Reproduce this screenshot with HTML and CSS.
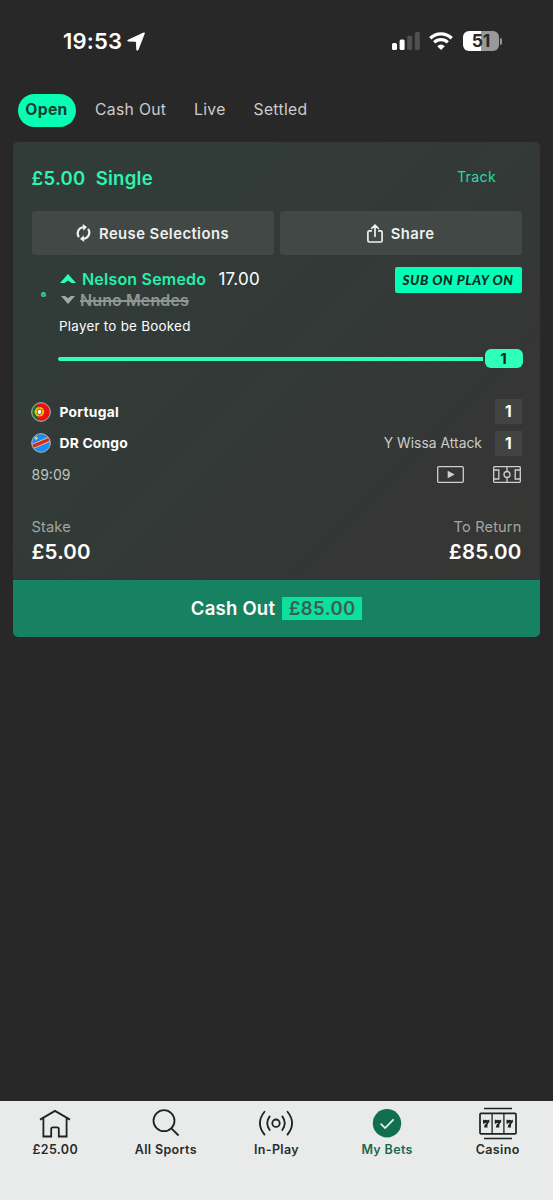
FILE: index.html
```
<!DOCTYPE html>
<html lang="en">
<head>
<meta charset="utf-8">
<meta name="viewport" content="width=device-width, initial-scale=1">
<title>My Bets</title>
<link rel="stylesheet" href="styles.css">
</head>
<body>
<div class="app">
  <header class="status">
    <div class="status-left">
      <span class="time">19:53</span>
      <svg class="locate" width="18" height="19" viewBox="0 0 18 19"><path d="M16.600.500Q18.200 0 17.800 1.500L11.600 17.600Q10.500 19.600 9.300 17.800L9 10.600Q8.900 9.800 8.200 9.800L1 9.500Q-.700 8.700 1 7.700Z" fill="#fff"/></svg>
    </div>
    <div class="status-right">
      <svg width="28" height="18" viewBox="0 0 28 18"><rect x="0" y="11" width="5" height="7" rx="1.500" fill="#fff"/><rect x="7.600" y="7.500" width="5" height="10.500" rx="1.500" fill="#fff"/><rect x="15.200" y="3.800" width="5" height="14.200" rx="1.500" fill="#505050"/><rect x="22.800" y="0" width="5" height="18" rx="1.500" fill="#505050"/></svg>
      <svg class="wifi" width="24" height="18" viewBox="0 0 24 18"><path d="M1.300 6.200a15.300 15.300 0 0 1 21.400 0M5.200 10.400a9.900 9.900 0 0 1 13.600 0" fill="none" stroke="#fff" stroke-width="3.300"/><path d="M8.200 14.200a5.800 5.800 0 0 1 7.600 0L12 18Z" fill="#fff"/></svg>
      <div class="battery"><span class="battery-level">51</span><i class="battery-cap"></i></div>
    </div>
  </header>

  <nav class="tabs">
    <span class="tab tab-active">Open</span><span class="tab tab-cash">Cash Out</span><span class="tab tab-live">Live</span><span class="tab tab-settled">Settled</span>
  </nav>

  <main class="card">
    <div class="card-body">
      <div class="card-head"><span class="bet-type"><span>£5.00</span><span>Single</span></span><span class="track">Track</span></div>
      <div class="actions">
        <button class="action action-reuse">
          <svg width="15" height="18" viewBox="0 0 15 18" fill="none" stroke="#eef1ef" stroke-width="2.100"><path d="M3 13.200A6.100 6.100 0 0 1 7.800 3.300M12 4.800A6.100 6.100 0 0 1 7.200 14.700"/><path d="M6.700 0 11 3.100 7.300 6.800ZM8.300 18 4 14.900 7.700 11.200Z" fill="#eef1ef" stroke="none"/></svg>
          <span>Reuse Selections</span>
        </button>
        <button class="action action-share">
          <svg width="16" height="19" viewBox="0 0 16 19" fill="none" stroke="#eef1ef" stroke-width="1.700" stroke-linecap="round" stroke-linejoin="round"><path d="M4.200 6.900H2.300Q.900 6.900.900 8.300v8.300Q.900 18 2.300 18h11.400q1.400 0 1.400-1.400V8.300q0-1.400-1.400-1.400h-1.900M8 12.300V1.200M4.600 4.500 8 1.100l3.400 3.400"/></svg>
          <span>Share</span>
        </button>
      </div>

      <section class="selection">
        <div class="marker"><svg width="5" height="5" viewBox="0 0 5 5"><circle cx="2.500" cy="2.500" r="2.500" fill="#2adba0"/><path d="m1.200 2.500 1 1 1.600-1.900" stroke="#27423a" stroke-width=".8" fill="none"/></svg></div>
        <div class="selection-main">
          <div class="player-in"><svg width="16" height="9" viewBox="0 0 16 9"><path d="M0 9 8 0l8 9h-4.500L8 6.500 4.500 9Z" fill="#2cffb6"/></svg><span class="in-name">Nelson Semedo</span><span class="odds">17.00</span><span class="promo">SUB ON PLAY ON</span></div>
          <div class="player-out"><svg width="14" height="8" viewBox="0 0 14 8"><path d="M0 0 7 8l7-8h-4L7 2.200 4 0Z" fill="#a3a8a6"/></svg><span>Nuno Mendes</span></div>
          <div class="market">Player to be Booked</div>
          <div class="progress"><i></i><b>1</b></div>
        </div>
      </section>

      <section class="match">
        <div class="team">
          <svg width="20" height="20" viewBox="0 0 20 20"><defs><clipPath id="pt"><circle cx="10" cy="10" r="9"/></clipPath></defs><g clip-path="url(#pt)"><path d="M0 0h20v20H0Z" fill="#f00f0f"/><path d="M0 0h6.500v20H0Z" fill="#147329"/><circle cx="8.400" cy="9.800" r="4.800" fill="#efc51c"/><path d="m4.800 7.200 7.200 5.200M12 7.200l-7.200 5.200M8.400 5v9.600" stroke="#b96b16" stroke-width=".7"/><path d="M6.200 7.300h4.600v3.200q0 2.400-2.300 2.400t-2.300-2.400Z" fill="#e23a30"/><path d="M7 8h3v2.600q0 1.400-1.500 1.400T7 10.600Z" fill="#fff"/></g><circle cx="10" cy="10" r="9.300" fill="none" stroke="#b9bdb5" stroke-width="1"/></svg>
          <span class="team-name">Portugal</span><span class="score">1</span>
        </div>
        <div class="team">
          <svg width="20" height="20" viewBox="0 0 20 20"><defs><clipPath id="cd"><circle cx="10" cy="10" r="9"/></clipPath></defs><g clip-path="url(#cd)"><path d="M0 0h20v20H0Z" fill="#178df5"/><path d="M-1 14.500 21 5.200" stroke="#f4d36b" stroke-width="5"/><path d="M-1 14.500 21 5.200" stroke="#d8212b" stroke-width="3.300"/><path d="m5.200 3 .6 1.300 1.400.2-1 1 .2 1.400-1.200-.7-1.200.7.200-1.400-1-1 1.400-.2Z" fill="#efdc5a"/></g><circle cx="10" cy="10" r="9.300" fill="none" stroke="#b9c3c8" stroke-width="1"/></svg>
          <span class="team-name congo">DR Congo</span><span class="event">Y Wissa Attack</span><span class="score">1</span>
        </div>
        <div class="clock-row"><span class="clock">89:09</span>
          <svg width="27" height="17" viewBox="0 0 27 17"><rect x=".7" y=".7" width="25.600" height="15.600" rx="1" fill="none" stroke="#ccd0ce" stroke-width="1.300"/><path d="m10.700 4.800 7 3.700-7 3.700Z" fill="#ccd0ce"/></svg>
          <svg class="pitch" width="28" height="17" viewBox="0 0 28 17" fill="none" stroke="#ccd0ce" stroke-width="1.300"><rect x=".7" y=".7" width="26.600" height="15.600" rx=".8"/><path d="M14 .7v4.800M14 11.500v4.800M.7 4H5.800v9H.7M27.300 4h-5.100v9h5.100"/><circle cx="14" cy="8.500" r="3"/></svg>
        </div>
      </section>

      <footer class="totals">
        <div><div class="label">Stake</div><div class="amount">£5.00</div></div>
        <div class="returns"><div class="label">To Return</div><div class="amount">£85.00</div></div>
      </footer>
    </div>
    <button class="cashout"><span>Cash Out</span><mark>£85.00</mark></button>
  </main>

  <nav class="bottom">
    <div class="nav-item"><svg width="32" height="32" viewBox="0 0 32 32" fill="none" stroke="#202322" stroke-width="1.800"><path d="M1 12.600 16 3.900l15 8.700M4.400 11v18.500h7.800v-7.600q0-1.600 1.600-1.600h4.400q1.600 0 1.600 1.600v7.600h7.800V11"/></svg><span>£25.00</span></div>
    <div class="nav-item"><svg width="32" height="32" viewBox="0 0 32 32" fill="none" stroke="#202322" stroke-width="1.800"><circle cx="14" cy="13.700" r="10.500"/><path d="m21.300 21.300 7.300 7.200"/></svg><span>All Sports</span></div>
    <div class="nav-item"><svg width="36" height="32" viewBox="0 0 36 32" fill="none" stroke="#202322" stroke-width="1.800" stroke-linecap="round"><circle cx="18" cy="16.200" r="3.700"/><path d="M11.700 9.400q-5 6.800 0 13.600M24.300 9.400q5 6.800 0 13.600M6.500 4.800q-9.200 11.400 0 22.800M29.500 4.800q9.200 11.400 0 22.800"/></svg><span>In-Play</span></div>
    <div class="nav-item nav-active"><svg width="32" height="32" viewBox="0 0 32 32" fill="none"><circle cx="16" cy="16.200" r="14.200" fill="#126e51"/><path d="m9.600 16.700 4.500 4.300 8.500-8.700" stroke="#eef3f0" stroke-width="1.700"/></svg><span>My Bets</span></div>
    <div class="nav-item"><svg width="38" height="32" viewBox="0 0 38 32" fill="none" stroke="#202322"><path d="M5 1.500h28M5 31.500h28" stroke-width="1.400"/><rect x="1" y="6.300" width="36" height="20.500" rx="1" stroke-width="1.700"/><path d="M13.100 6.300v20.500M24.900 6.300v20.500" stroke-width="1.300"/><g fill="#202322" stroke="none"><path id="seven" d="M4 12.700h1.100l.4.600q1.200-1 2.500-.2 1 .6 1.800-.4h.6v2.300q-2.700 2.200-1.800 5.400H5.100q.1-2.800 2.600-4.600-1.600-.2-2.700 1H4Z"/><use href="#seven" x="11.800"/><use href="#seven" x="23.500"/></g></svg><span>Casino</span></div>
  </nav>
</div>
</body>
</html>
```
FILE: styles.css
```
* { box-sizing: border-box; }
body { margin: 0; background: #282828; font-family: Inter, "Liberation Sans", sans-serif; color: #fff; }
svg { display: block; flex: none; overflow: visible; }
button { border: 0; padding: 0; font: inherit; color: inherit; }
.app { width: 553px; height: 1200px; display: flex; flex-direction: column; }

.status { height: 82px; padding: 0 54px 0 63px; display: flex; justify-content: space-between; align-items: center; flex: none; }
.status-left { display: flex; align-items: center; gap: 4px; }
.time { font-size: 22px; font-weight: 600; letter-spacing: .2px; width: 60px; white-space: nowrap; }
.status-right { display: flex; align-items: center; gap: 9px; }
.battery { position: relative; width: 36px; height: 20px; margin-left: 1px; border-radius: 6px; background: linear-gradient(90deg, #fff 51%, #999 51%); color: #292929; font-size: 17.500px; font-weight: 700; line-height: 20px; text-align: center; }
.battery-cap { position: absolute; left: 37px; top: 6.500px; width: 2px; height: 7px; border-radius: 0 2px 2px 0; background: #999; }

.tabs { height: 60px; padding: 12.400px 0 0 17.500px; display: flex; align-items: flex-start; flex: none; }
.tab { height: 33px; line-height: 32px; font-size: 15.700px; letter-spacing: .33px; color: #ccc; white-space: nowrap; }
.tab-active { width: 58px; text-align: center; border-radius: 17px; background: #05ffb4; color: #123f32; font-weight: 700; }
.tab-cash { margin-left: 19.500px; width: 99px; }
.tab-live { width: 59.500px; }

.card { width: 527px; height: 495px; margin-left: 13px; border-radius: 5px; overflow: hidden; flex: none; }
.card-body { height: 438px; padding: 15px 18.500px 0 18.500px; background: linear-gradient(135deg, #313c38 0%, #323a37 48%, #353635 78%, #373636 100%); }
.card-head { height: 54px; display: flex; justify-content: space-between; padding-right: 25.500px; line-height: 42px; }
.bet-type { display: flex; gap: 10px; font-size: 18.500px; letter-spacing: .3px; font-weight: 600; color: #2cf5af; }
.track { font-size: 14.200px; letter-spacing: .3px; line-height: 40px; color: #25dfa0; }
.actions { display: grid; grid-template-columns: 1fr 1fr; gap: 6px; }
.action { height: 44px; display: flex; align-items: center; justify-content: center; gap: 8px; border-radius: 3px; background: #414846; color: #edf0ee; font-size: 14.800px; letter-spacing: .45px; font-weight: 600; white-space: nowrap; }
.action span { padding-top: 1px; }

.selection { display: flex; height: 116px; }
.marker { width: 26.500px; padding: 37px 0 0 9px; }
.selection-main { flex: 1; padding-top: 12px; }
.player-in { display: flex; align-items: center; height: 25px; padding-left: 2px; }
.player-in > svg, .in-name, .odds { margin-bottom: 2px; }
.in-name { margin-left: 6px; width: 136.500px; font-size: 16px; letter-spacing: .2px; font-weight: 600; color: #27efaa; white-space: nowrap; }
.odds { font-size: 17px; letter-spacing: .2px; }
.promo { margin-left: auto; width: 127px; height: 26px; border-radius: 2px; background: #02ffb8; color: #10291f; text-align: center; font: italic 900 13.500px/27px Lato, sans-serif; letter-spacing: .55px; white-space: nowrap; }
.player-out { display: flex; align-items: center; gap: 5px; height: 17px; margin-top: -1px; padding-left: 3px; font-size: 16px; letter-spacing: .1px; font-weight: 600; color: #8f9693; }
.player-out span { text-decoration: line-through; text-decoration-thickness: 1.500px; }
.market { margin: 8px 0 0 1px; line-height: 20px; font-size: 13.400px; letter-spacing: .26px; }
.progress { display: flex; align-items: center; gap: 2px; margin: 12.500px -1px 0 0; height: 20px; }
.progress i { flex: 1; height: 4px; background: #2effba; border-radius: 2px 0 0 2px; }
.progress b { width: 38px; height: 19px; border-radius: 6px; background: #2effba; color: #10291f; text-align: center; font-size: 15px; line-height: 19px; }

.match { padding-top: 28px; display: flex; flex-direction: column; gap: 6.500px; }
.team { height: 25px; display: flex; align-items: center; }
.team svg { margin-left: -1px; }
.team-name { margin-left: 9px; font-size: 13.800px; letter-spacing: .27px; font-weight: 700; }
.congo { letter-spacing: .2px; }
.score { margin-left: auto; width: 26.500px; height: 25px; background: #414443; text-align: center; line-height: 25px; font-size: 15.500px; font-weight: 700; }
.event { margin-left: auto; font-size: 13.800px; letter-spacing: .05px; color: #cacdcb; }
.event + .score { margin-left: 13px; }
.clock-row { height: 25px; display: flex; align-items: center; }
.clock { font-size: 14px; color: #bfc3c1; margin-right: auto; }
.pitch { margin-left: 29px; margin-right: .5px; }
.totals { margin-top: 28px; display: flex; justify-content: space-between; }
.label { height: 24px; line-height: 25px; font-size: 14.600px; letter-spacing: .15px; color: #a1a5a3; }
.amount { height: 25px; line-height: 25px; font-size: 20.500px; letter-spacing: .2px; font-weight: 600; }
.returns { text-align: right; }
.cashout { width: 527px; height: 57px; display: flex; align-items: center; justify-content: center; background: #178262; font-size: 18.500px; letter-spacing: .25px; font-weight: 600; gap: 7px; }
.cashout span { padding-bottom: 1px; }
.cashout mark { width: 80px; height: 23px; line-height: 23px; background: #0be09c; color: #3e5c52; text-align: center; letter-spacing: .4px; }

.bottom { margin-top: auto; height: 99px; padding-top: 6px; display: grid; grid-template-columns: repeat(5, 1fr); background: #e9ebea; color: #282b2a; flex: none; }
.nav-item { display: flex; flex-direction: column; align-items: center; font-size: 12.500px; letter-spacing: .35px; line-height: 22px; font-weight: 600; }
.nav-active { color: #17694d; }
```
